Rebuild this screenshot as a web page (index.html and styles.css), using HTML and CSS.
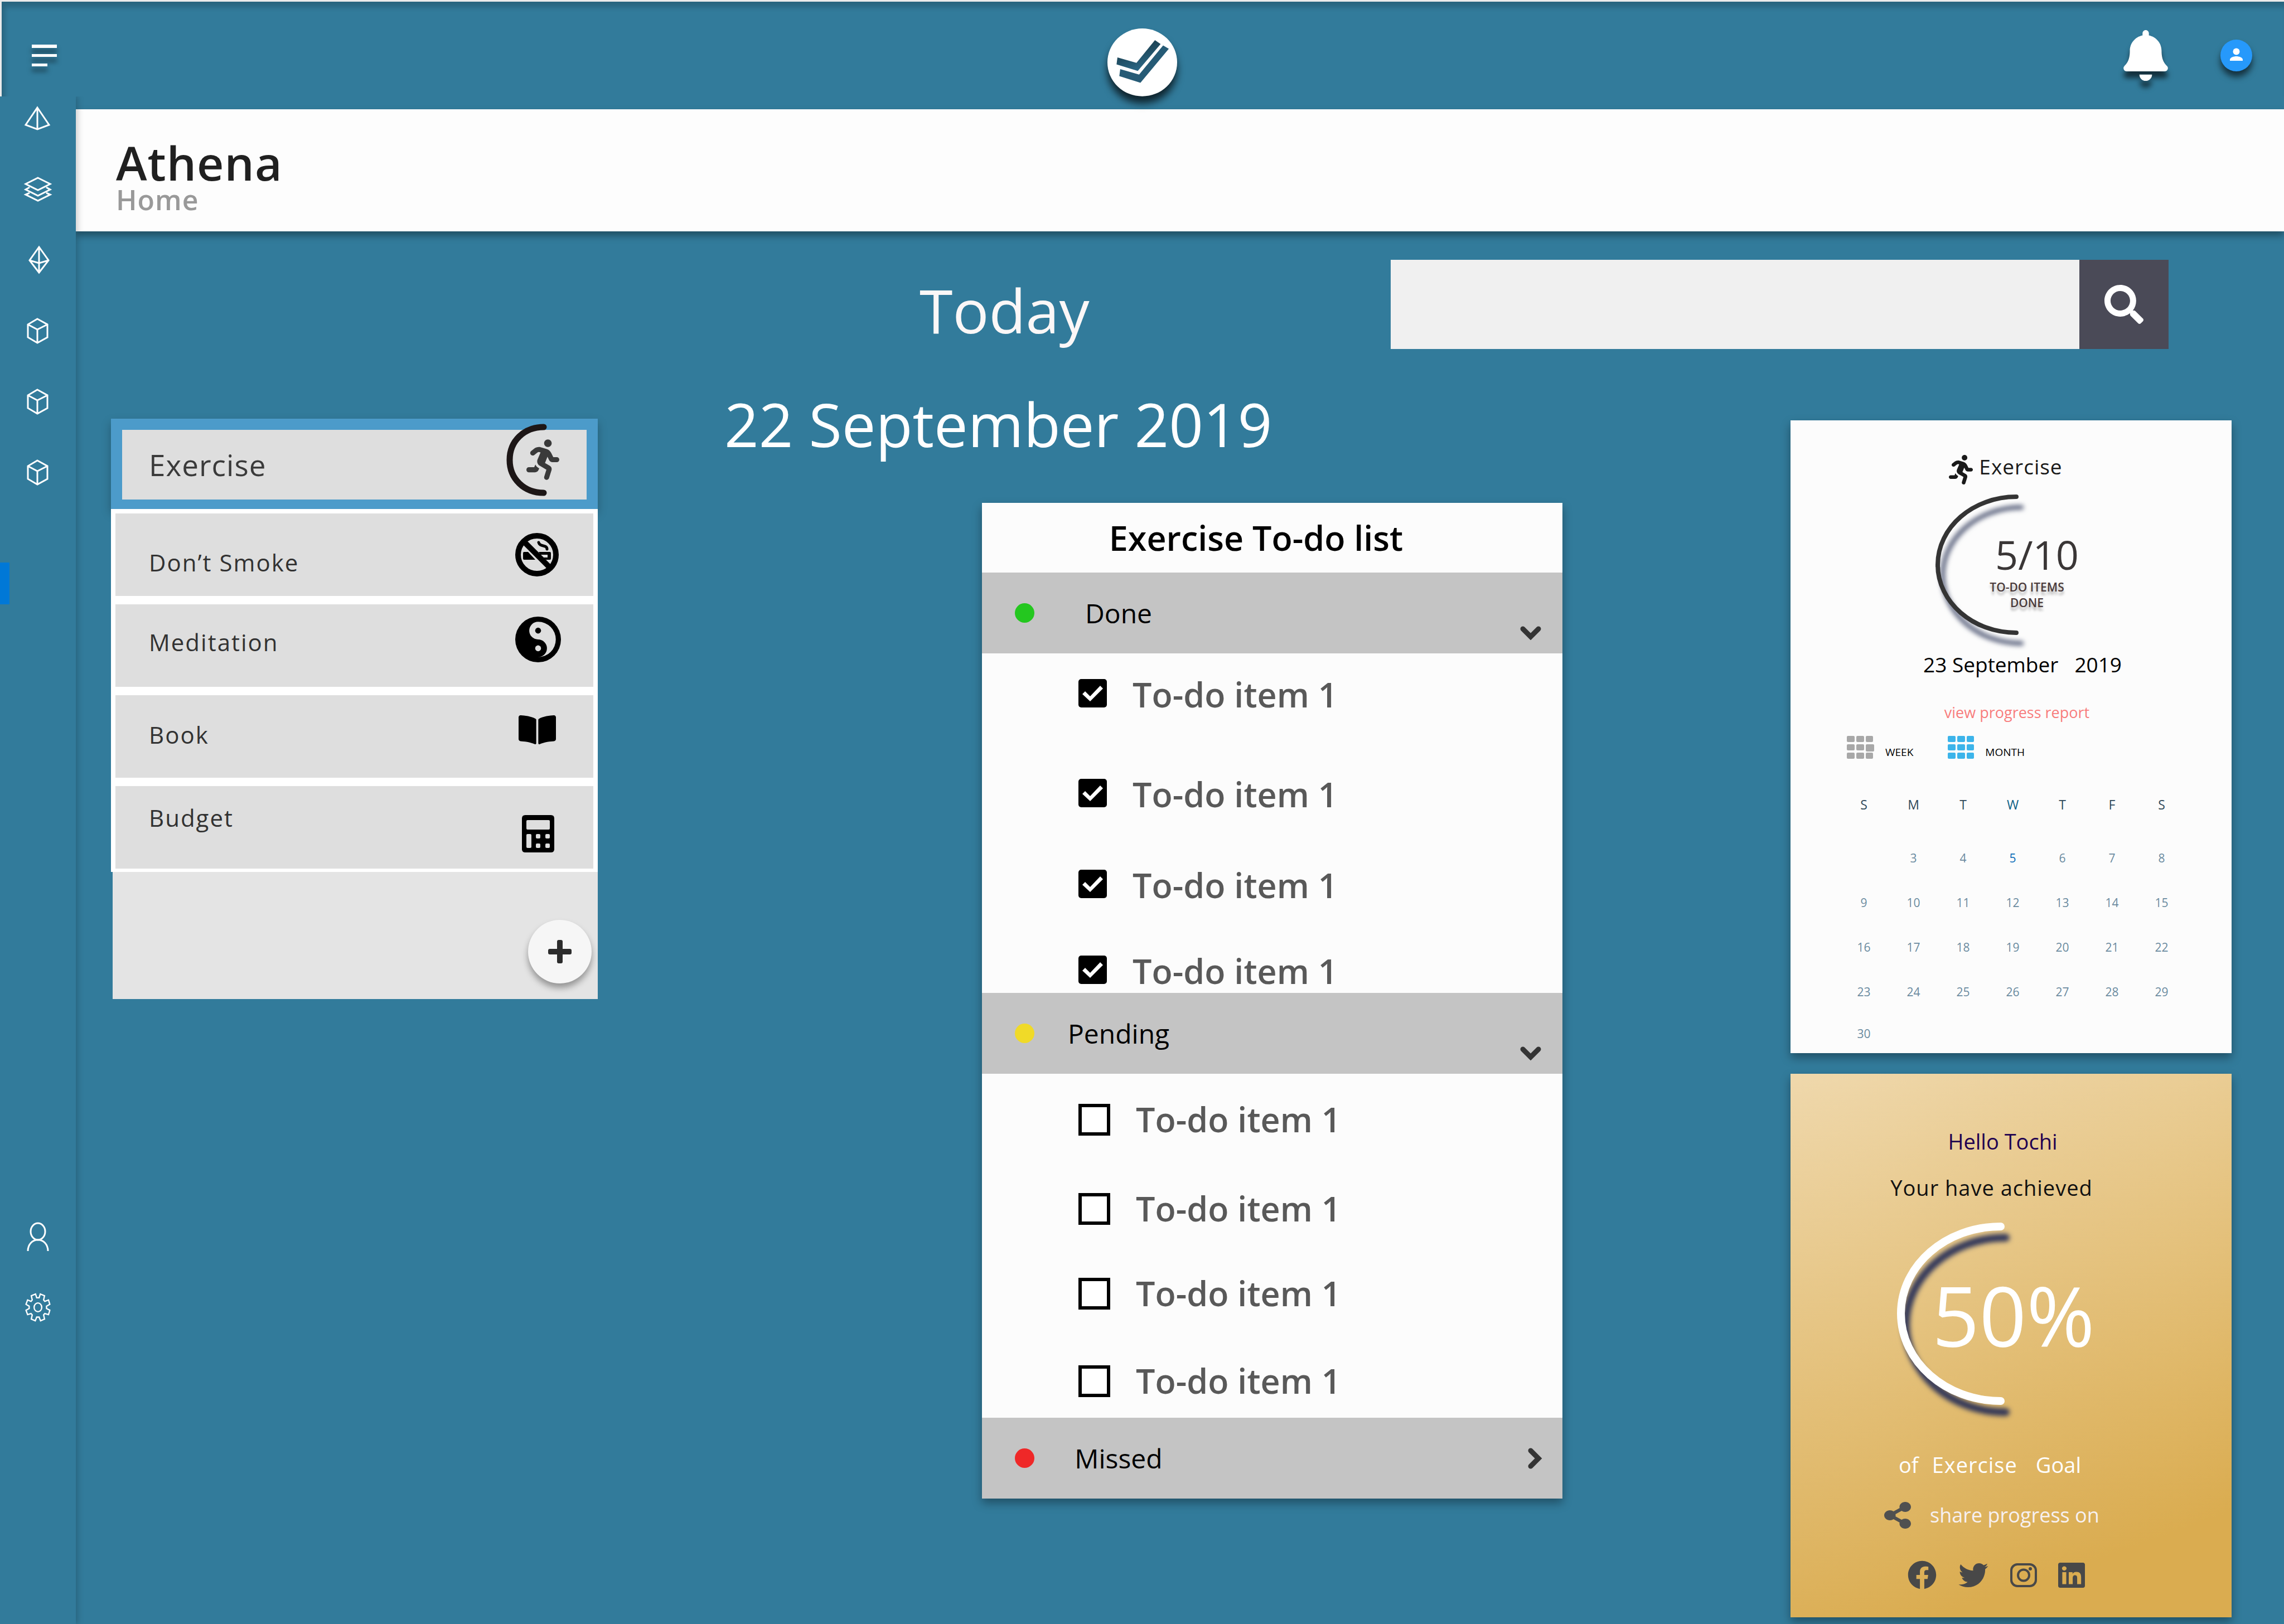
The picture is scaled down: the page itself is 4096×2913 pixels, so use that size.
FILE: index.html
```html
<!DOCTYPE html>
<html lang="en">
<head>
<meta charset="utf-8">
<title>Athena – Home</title>
<meta name="viewport" content="width=device-width, initial-scale=1">
<link rel="stylesheet" href="styles.css">
</head>
<body>
<svg class="defs" aria-hidden="true">
  <symbol id="runner" viewBox="0 0 416 512"><path d="M272 96c26.51 0 48-21.49 48-48S298.51 0 272 0s-48 21.49-48 48 21.49 48 48 48zM113.69 317.47l-14.8 34.52H32c-17.67 0-32 14.33-32 32s14.33 32 32 32h77.45c19.25 0 36.58-11.44 44.11-29.09l8.79-20.52-10.67-6.3c-17.32-10.23-30.06-25.37-37.99-42.61zM384 223.99h-44.03l-26.06-53.25c-12.5-25.55-35.45-44.23-61.78-50.94l-71.08-21.14c-28.3-6.8-57.77-.55-80.84 17.14l-39.67 30.41c-14.03 10.75-16.69 30.83-5.94 44.86s30.84 16.66 44.86 5.94l39.69-30.41c7.67-5.89 17.44-8 25.27-6.14l14.7 4.37-37.46 87.39c-12.62 29.48-1.31 64.01 26.3 80.31l84.98 50.17-27.47 87.73c-5.28 16.86 4.11 34.82 20.97 40.09 3.19 1 6.41 1.48 9.58 1.48 13.61 0 26.25-8.77 30.52-22.45l31.64-101.06c5.91-20.77-2.89-43.08-21.64-54.39l-61.24-36.14 31.31-78.28 20.27 41.43c8 16.34 24.92 26.89 43.11 26.89H384c17.67 0 32-14.33 32-32s-14.33-31.99-32-31.99z"/></symbol>
  <symbol id="cube" viewBox="0 0 56 56"><path d="M27 7 45 17V40L27 50 10 40V17ZM10 17 27 26 45 17M27 26V50"/></symbol>
  <symbol id="chevron" viewBox="0 0 40 26"><path d="M6 6 20 20 34 6" fill="none" stroke="currentColor" stroke-width="9" stroke-linecap="round" stroke-linejoin="miter"/></symbol>
  <linearGradient id="logo-shade" x1="0" y1="0" x2=".5" y2="1"><stop offset="0" stop-color="#173441"/><stop offset=".5" stop-color="#1f4a5e"/><stop offset="1" stop-color="#2c6a89"/></linearGradient>
</svg>

<header class="topbar">
  <button class="icon-button menu" aria-label="Menu"><svg width="46" height="40" viewBox="0 0 46 40" fill="#fff"><path d="M0 0H45V6H0ZM0 17H45V22H0ZM0 34H28V39H0Z"/></svg></button>
  <a class="logo" href="#" aria-label="Athena"><svg width="125" height="122" viewBox="66 66 528 515"><ellipse cx="330" cy="323" rx="264" ry="257" fill="#fff"/><path fill="url(#logo-shade)" d="M142 285 286 327 426 155 469 184 296 388 135 338Z"/><path fill="#265b76" d="M163 374 306 415 488 195 531 220 316 478 156 427Z"/></svg></a>
  <div class="topbar-actions">
    <button class="icon-button bell" aria-label="Notifications"><svg width="80" height="91" viewBox="0 0 448 512" fill="#fff"><path d="M224 512c35.32 0 63.97-28.65 63.97-64H160.03c0 35.35 28.65 64 63.97 64zm215.39-149.71c-19.32-20.76-55.47-51.99-55.47-154.29 0-77.7-54.48-139.9-127.94-155.16V32c0-17.67-14.32-32-31.98-32s-31.98 14.33-31.98 32v20.84C118.56 68.1 64.08 130.3 64.08 208c0 102.3-36.15 133.53-55.47 154.29-6 6.45-8.66 14.16-8.61 21.71.11 16.4 12.98 32 32.1 32h383.8c19.12 0 32-15.6 32.1-32 .05-7.55-2.61-15.27-8.61-21.71z"/></svg></button>
    <button class="icon-button avatar" aria-label="Account"><svg width="57" height="57" viewBox="0 0 57 57"><circle cx="28.500" cy="28.500" r="28.500" fill="#2699fb"/><circle cx="28.500" cy="21.500" r="6" fill="#fff"/><path d="M17 38v-2c0-4 7-6 11.500-6S40 32 40 36v2Z" fill="#fff"/></svg></button>
  </div>
</header>

<div class="shell">
  <nav class="sidebar" aria-label="Sections">
    <div class="side-group">
      <a href="#" aria-label="Overview"><svg viewBox="0 0 56 56"><path d="M27 9 48 40 27 48 6 40ZM27 9V48"/></svg></a>
      <a href="#" aria-label="Layers"><svg viewBox="0 0 56 56"><path d="M28 8 50 19 28 30 6 19ZM13 25 6 29 28 40 50 29 43 25M13 35 6 38 28 49 50 38 43 35"/></svg></a>
      <a href="#" aria-label="Goals"><svg viewBox="0 0 56 56"><path d="M30 5 47 29 30 51 13 29ZM30 5V51M13 29 30 34 47 29"/></svg></a>
      <a href="#" aria-label="Box one"><svg><use href="#cube"/></svg></a>
      <a href="#" aria-label="Box two"><svg><use href="#cube"/></svg></a>
      <a href="#" aria-label="Box three"><svg><use href="#cube"/></svg></a>
    </div>
    <div class="side-marker"></div>
    <div class="side-group side-group-end">
      <a href="#" aria-label="Profile"><svg viewBox="0 0 56 56"><ellipse cx="28" cy="19" rx="13" ry="15"/><path d="M10 54C10 42 18 34 28 34S46 42 46 54"/></svg></a>
      <a href="#" aria-label="Settings"><svg viewBox="20 603 236 236" class="gear"><path d="M120 620 129 649H147L156 620 188 633 181 665 190 676 218 665 228 698 203 712V730L228 743 218 776 190 768 181 778 188 810 158 823 147 795H129L118 823 88 810 95 778 86 768 60 776 48 743 72 730V712L48 698 60 665 86 676 95 665 88 633Z"/><ellipse cx="138" cy="721" rx="29" ry="33"/></svg></a>
    </div>
  </nav>

  <main class="main">
    <div class="page-head">
      <h1>Athena</h1>
      <p>Home</p>
    </div>

    <div class="content">
      <div class="day">
        <h2>Today</h2>
        <p>22 September 2019</p>
      </div>

      <form class="search" role="search">
        <input type="search" aria-label="Search">
        <button type="button" aria-label="Search"><svg width="70" height="70" viewBox="0 0 512 512" fill="#fff"><path d="M505 442.7L405.3 343c-4.5-4.5-10.6-7-17-7H372c27.6-35.3 44-79.7 44-128C416 93.1 322.9 0 208 0S0 93.1 0 208s93.1 208 208 208c48.3 0 92.7-16.4 128-44v16.3c0 6.4 2.5 12.5 7 17l99.700 99.700c9.400 9.400 24.600 9.400 33.900 0l28.300-28.300c9.400-9.400 9.400-24.600.1-34zM208 336c-70.700 0-128-57.200-128-128 0-70.700 57.200-128 128-128 70.700 0 128 57.200 128 128 0 70.700-57.200 128-128 128z"/></svg></button>
      </form>

      <aside class="habits">
        <div class="habit-active">
          <a href="#">
            <span>Exercise</span>
            <svg width="96" height="130" viewBox="0 0 96 130"><path d="M67 6C32 6 6 31 6 65S32 124 67 124" fill="none" stroke="#1d1616" stroke-width="11" stroke-linecap="round"/><use href="#runner" x="36" y="28" width="59" height="73" fill="#3a3a3a"/></svg>
          </a>
        </div>
        <ul class="habit-list">
          <li><a href="#" class="habit habit-smoke"><span>Don’t Smoke</span>
            <svg width="78" height="78" viewBox="0 0 78 78"><circle cx="39" cy="39" r="34" fill="none" stroke="#000" stroke-width="10"/><path d="M16 34H23L36 48H16Q14 48 14 46V36Q14 34 16 34ZM42 34H62Q64 34 64 36V46Q64 48 62 48H55L50 44H58V39H45Z"/><path d="M42 17C44 26 57 20 57 29" fill="none" stroke="#000" stroke-width="5" stroke-linecap="round"/><path d="M15 15 63 63" stroke="#000" stroke-width="10"/></svg></a></li>
          <li><a href="#" class="habit habit-meditation"><span>Meditation</span>
            <svg width="82" height="82" viewBox="0 0 496 496"><circle cx="248" cy="248" r="248"/><path fill="#dedede" d="M248 56a192 192 0 0 1 0 384a96 96 0 0 0 0-192a96 96 0 0 1 0-192Z"/><circle cx="248" cy="152" r="32"/><circle cx="248" cy="344" r="32" fill="#dedede"/></svg></a></li>
          <li><a href="#" class="habit habit-book"><span>Book</span>
            <svg width="67" height="60" viewBox="0 0 576 512"><path d="M542.22 32.050c-54.8 3.11-163.72 14.43-230.96 55.59-4.64 2.84-7.27 7.89-7.27 13.17v363.87c0 11.55 12.63 18.85 23.28 13.49 69.18-34.82 169.23-44.32 218.7-46.92 16.89-.89 30.02-14.43 30.02-30.66V62.75c.01-17.71-15.35-31.74-33.77-30.7zM264.73 87.64C197.5 46.48 88.58 35.17 33.78 32.05 15.36 31.01 0 45.04 0 62.75V400.6c0 16.24 13.13 29.78 30.02 30.66 49.49 2.6 149.59 12.11 218.77 46.95 10.62 5.35 23.21-1.94 23.21-13.46V100.63c0-5.29-2.62-10.14-7.27-12.99z"/></svg></a></li>
          <li><a href="#" class="habit habit-budget"><span>Budget</span>
            <svg width="58" height="67" viewBox="0 0 58 67"><path fill-rule="evenodd" d="M6 0H52Q58 0 58 6V61Q58 67 52 67H6Q0 67 0 61V6Q0 0 6 0ZM10 9Q8 9 8 11V24Q8 26 10 26H48Q50 26 50 24V11Q50 9 48 9ZM10 34Q8 34 8 36V57Q8 59 10 59H15Q17 59 17 57V36Q17 34 15 34ZM27 34Q25 34 25 36V40Q25 42 27 42H31Q33 42 33 40V36Q33 34 31 34ZM44 34Q42 34 42 36V40Q42 42 44 42H48Q50 42 50 40V36Q50 34 48 34ZM27 51Q25 51 25 53V57Q25 59 27 59H31Q33 59 33 57V53Q33 51 31 51ZM44 51Q42 51 42 53V57Q42 59 44 59H48Q50 59 50 57V53Q50 51 48 51Z"/></svg></a></li>
        </ul>
        <div class="habit-footer">
          <button class="add" aria-label="Add habit"><svg width="42" height="42" viewBox="0 0 42 42" fill="#2c2c2c"><rect x="16" width="10" height="42" rx="3"/><rect y="16" width="42" height="10" rx="3"/></svg></button>
        </div>
      </aside>

      <section class="todo">
        <h2>Exercise To-do list</h2>
        <button class="bar" aria-expanded="true"><i class="dot dot-done"></i><span>Done</span><svg class="chev-down" width="40" height="26"><use href="#chevron"/></svg></button>
        <ul class="items items-done">
          <li><label><input type="checkbox" checked>To-do item 1</label></li>
          <li><label><input type="checkbox" checked>To-do item 1</label></li>
          <li><label><input type="checkbox" checked>To-do item 1</label></li>
          <li><label><input type="checkbox" checked>To-do item 1</label></li>
        </ul>
        <button class="bar" aria-expanded="true"><i class="dot dot-pending"></i><span>Pending</span><svg class="chev-down" width="40" height="26"><use href="#chevron"/></svg></button>
        <ul class="items items-pending">
          <li><label><input type="checkbox">To-do item 1</label></li>
          <li><label><input type="checkbox">To-do item 1</label></li>
          <li><label><input type="checkbox">To-do item 1</label></li>
          <li><label><input type="checkbox">To-do item 1</label></li>
        </ul>
        <button class="bar" aria-expanded="false"><i class="dot dot-missed"></i><span>Missed</span><svg width="26" height="40" viewBox="0 0 26 40"><path d="M6 6 20 20 6 34" fill="none" stroke="currentColor" stroke-width="9" stroke-linecap="round"/></svg></button>
      </section>

      <div class="side-cards">
        <section class="progress-card">
          <h3><svg width="45" height="53"><use href="#runner"/></svg><span>Exercise</span></h3>
          <div class="gauge">
            <svg width="152" height="252" viewBox="0 0 152 252"><path d="M145 4C67 4 4 59 4 126S67 248 145 248" fill="none" stroke="#343434" stroke-width="8" stroke-linecap="round"/></svg>
            <div class="gauge-text"><strong>5/10</strong><span>TO-DO ITEMS<br>DONE</span></div>
          </div>
          <p class="date"><span>23 September</span><span>2019</span></p>
          <a class="report" href="#">view progress report</a>
          <div class="range">
            <button><svg width="49" height="41" viewBox="0 0 49 41" fill="#a8a8a8"><rect width="14" height="11" rx="2"/><rect x="17" width="14" height="11" rx="2"/><rect x="34" width="13" height="11" rx="2"/><rect y="15" width="14" height="11" rx="2"/><rect x="17" y="15" width="14" height="11" rx="2"/><rect x="34" y="15" width="15" height="13" rx="2"/><rect y="30" width="14" height="11" rx="2"/><rect x="17" y="30" width="14" height="11" rx="2"/><rect x="34" y="30" width="13" height="11" rx="2"/></svg>WEEK</button>
            <button><svg width="47" height="41" viewBox="0 0 47 41" fill="#3cb4ea"><rect width="14" height="11" rx="2"/><rect x="17" width="14" height="11" rx="2"/><rect x="34" width="13" height="11" rx="2"/><rect y="15" width="14" height="11" rx="2"/><rect x="17" y="15" width="14" height="11" rx="2"/><rect x="34" y="15" width="13" height="11" rx="2"/><rect y="30" width="14" height="11" rx="2"/><rect x="17" y="30" width="14" height="11" rx="2"/><rect x="34" y="30" width="13" height="11" rx="2"/></svg>MONTH</button>
          </div>
          <table class="calendar">
            <thead><tr><th>S</th><th>M</th><th>T</th><th class="now">W</th><th>T</th><th>F</th><th>S</th></tr></thead>
            <tbody>
              <tr><td></td><td>3</td><td>4</td><td class="now">5</td><td>6</td><td>7</td><td>8</td></tr>
              <tr><td>9</td><td>10</td><td>11</td><td>12</td><td>13</td><td>14</td><td>15</td></tr>
              <tr><td>16</td><td>17</td><td>18</td><td>19</td><td>20</td><td>21</td><td>22</td></tr>
              <tr><td>23</td><td>24</td><td>25</td><td>26</td><td>27</td><td>28</td><td>29</td></tr>
              <tr class="last"><td>30</td><td></td><td></td><td></td><td></td><td></td><td></td></tr>
            </tbody>
          </table>
        </section>

        <section class="goal-card">
          <h3>Hello Tochi</h3>
          <p class="achieved">Your have achieved</p>
          <div class="goal-gauge">
            <svg width="195" height="327" viewBox="0 0 195 327"><path d="M187 7C88 7 8 77 8 163S88 320 187 320" fill="none" stroke="#fff" stroke-width="14" stroke-linecap="round"/></svg>
            <strong>50%</strong>
          </div>
          <p class="goal"><span>of</span><span class="tracked">Exercise</span><span class="goal-end">Goal</span></p>
          <p class="share"><svg width="48" height="48" viewBox="0 0 448 512" preserveAspectRatio="none" fill="#505050"><path d="M352 320c-22.608 0-43.387 7.819-59.79 20.895l-102.486-64.054a96.551 96.551 0 0 0 0-41.683l102.486-64.054C308.613 184.181 329.392 192 352 192c53.019 0 96-42.981 96-96S405.019 0 352 0s-96 42.981-96 96c0 7.158.79 14.13 2.276 20.841L155.79 180.895C139.387 167.819 118.608 160 96 160c-53.019 0-96 42.981-96 96s42.981 96 96 96c22.608 0 43.387-7.819 59.79-20.895l102.486 64.054A96.301 96.301 0 0 0 256 416c0 53.019 42.981 96 96 96s96-42.981 96-96-42.981-96-96-96z"/></svg><span>share progress on</span></p>
          <div class="socials">
            <a href="#" aria-label="Facebook"><svg width="52" height="52" viewBox="0 0 512 512"><path d="M504 256C504 119 393 8 256 8S8 119 8 256c0 123.78 90.69 226.38 209.25 245V327.69h-63V256h63v-54.64c0-62.15 37-96.48 93.67-96.48 27.14 0 55.52 4.84 55.52 4.84v61h-31.28c-30.8 0-40.41 19.12-40.41 38.73V256h68.78l-11 71.69h-57.78V501C413.31 482.38 504 379.78 504 256z"/></svg></a>
            <a href="#" aria-label="Twitter"><svg width="56" height="53" viewBox="0 0 512 512"><path d="M459.37 151.716c.325 4.548.325 9.097.325 13.645 0 138.72-105.583 298.558-298.558 298.558-59.452 0-114.68-17.219-161.137-47.106 8.447.974 16.568 1.299 25.34 1.299 49.055 0 94.213-16.568 130.274-44.832-46.132-.975-84.792-31.188-98.112-72.772 6.498.974 12.995 1.624 19.818 1.624 9.421 0 18.843-1.3 27.614-3.573-48.081-9.747-84.143-51.98-84.143-102.985v-1.299c13.969 7.797 30.214 12.67 47.431 13.319-28.264-18.843-46.781-51.005-46.781-87.391 0-19.492 5.197-37.36 14.294-52.954 51.655 63.675 129.3 105.258 216.365 109.807-1.624-7.797-2.599-15.918-2.599-24.04 0-57.828 46.782-104.934 104.934-104.934 30.213 0 57.502 12.67 76.67 33.137 23.715-4.548 46.456-13.32 66.599-25.34-7.798 24.366-24.366 44.833-46.132 57.827 21.117-2.273 41.584-8.122 60.426-16.243-14.292 20.791-32.161 39.308-52.628 54.253z"/></svg></a>
            <a href="#" aria-label="Instagram"><svg width="48" height="43" viewBox="0 0 48 43" fill="none" stroke="#484848"><rect x="2" y="2" width="44" height="39" rx="11" stroke-width="4"/><circle cx="24" cy="21.500" r="10" stroke-width="4"/><circle cx="36" cy="10" r="3" fill="#484848" stroke="none"/></svg></a>
            <a href="#" aria-label="LinkedIn"><svg width="48" height="45" viewBox="0 32 448 448" preserveAspectRatio="none"><path d="M416 32H31.9C14.3 32 0 46.5 0 64.3v383.4C0 465.5 14.3 480 31.9 480H416c17.6 0 32-14.5 32-32.3V64.3c0-17.8-14.400-32.3-32-32.3zM135.400 416H69V202.200h66.500V416zm-33.200-243c-21.300 0-38.500-17.300-38.500-38.500S80.900 96 102.200 96c21.200 0 38.500 17.300 38.500 38.500 0 21.300-17.200 38.500-38.500 38.500zm282.100 243h-66.400V312c0-24.800-.5-56.700-34.500-56.700-34.600 0-39.900 27-39.900 54.900V416h-66.400V202.200h63.700v29.200h.9c8.900-16.8 30.600-34.500 62.900-34.500 67.200 0 79.700 44.300 79.700 101.900V416z"/></svg></a>
          </div>
        </section>
      </div>
    </div>
  </main>
</div>
</body>
</html>
```

FILE: styles.css
```css
* { box-sizing: border-box; }

body {
  margin: 0;
  min-height: 100vh;
  display: flex;
  flex-direction: column;
  background: #327b9b;
  color: #323232;
  font-family: "Open Sans", "Noto Sans", sans-serif;
}

h1, h2, h3, p, ul { margin: 0; padding: 0; font-weight: 400; }
ul { list-style: none; }
a { color: inherit; text-decoration: none; }
svg { display: block; flex: none; overflow: visible; }
button { border: 0; padding: 0; background: none; color: inherit; font: inherit; cursor: pointer; }
.defs { position: absolute; width: 0; height: 0; }

/* Top bar */
.topbar {
  display: grid;
  grid-template-columns: 1fr auto 1fr;
  align-items: center;
  height: 173px;
  padding: 23px 57px 0 54px;
  border-top: 3px solid #ebebeb;
  border-left: 3px solid #ebebeb;
  box-shadow: inset 6px 10px 10px rgba(0, 0, 0, .18);
}
.icon-button { display: block; justify-self: start; }
.menu svg { filter: drop-shadow(0 9px 4px rgba(0, 0, 0, .5)); }
.logo { align-self: end; filter: drop-shadow(0 13px 7px rgba(0, 0, 0, .7)); }
.topbar-actions { display: flex; justify-content: flex-end; align-items: center; gap: 94px; }
.bell svg { filter: drop-shadow(0 12px 5px rgba(0, 0, 0, .6)); }
.avatar svg { filter: drop-shadow(0 10px 6px rgba(0, 0, 0, .6)); }

.shell { display: flex; flex: 1; }

/* Sidebar */
.sidebar {
  display: flex;
  flex-direction: column;
  flex: none;
  width: 136px;
  padding: 11px 0 540px;
  background: #327b9b;
  box-shadow: 4px 0 10px rgba(0, 0, 0, .18);
  clip-path: inset(0 -20px 0 0);
  z-index: 1;
}
.side-group { display: flex; flex-direction: column; gap: 71px; padding-left: 40px; }
.side-group-end { margin-top: auto; }
.side-group svg { width: 56px; height: 56px; fill: none; stroke: #fff; stroke-width: 3px; }
.side-group .gear { stroke-width: 10px; }
.side-marker { width: 17px; height: 75px; margin-top: 134px; background: #0078d7; }

/* Page heading */
.main { flex: 1; min-width: 0; padding-top: 23px; }
.page-head {
  height: 219px;
  padding: 55px 72px 0;
  background: #fdfdfd;
  box-shadow: 0 8px 12px rgba(0, 0, 0, .35);
}
.page-head h1 { color: #202020; font-size: 84px; line-height: 82px; font-weight: 600; letter-spacing: 1px; }
.page-head p { color: #999; font-size: 50px; line-height: 50px; font-weight: 600; letter-spacing: 1px; }

/* Content grid */
.content {
  display: grid;
  grid-template-columns: 873fr 227fr 1195fr 308fr 409fr 791fr;
  grid-template-rows: 285px 151px auto;
  padding: 51px 94px 12px 63px;
}
.day { grid-area: 1 / 3 / 3 / 4; padding-top: 31px; color: #fff; font-size: 108px; line-height: 120px; white-space: nowrap; }
.day h2 { padding-left: 350px; font-size: 108px; color: #fbf7f7; }
.day p { margin-top: 84px; }

.search { grid-area: 1 / 4 / 2 / 7; display: flex; height: 160px; margin-right: 113px; }
.search input { flex: 1; min-width: 0; border: 0; padding: 0 40px; background: #f0f0f0; font: inherit; font-size: 60px; appearance: none; border-radius: 0; }
.search button { width: 160px; padding-left: 45px; background: #4a4a57; }

/* Habit list */
.habits { grid-area: 2 / 1 / 4 / 2; }
.habit-active { position: relative; padding: 20px 20px 17px; background: #4c9bca; box-shadow: 0 8px 16px rgba(0, 0, 0, .25); }
.habit-active a { display: flex; justify-content: space-between; height: 125px; padding: 0 48px; background: #dedede; color: #3a3a3a; font-size: 53px; line-height: 125px; letter-spacing: 1px; }
.habit-active svg { margin-top: -11px; }
.habit-list { position: relative; display: flex; flex-direction: column; gap: 15px; padding: 8px 8px 6px; background: #fff; }
.habit { display: flex; justify-content: space-between; align-items: flex-start; height: 148px; padding: 0 58px 0 60px; background: #dedede; font-size: 42px; line-height: 56px; letter-spacing: 2px; }
.habit svg { fill: #000; }
.habit span { flex: 1; padding-top: 40px; }
.habit-smoke span { padding-top: 60px; }
.habit-book span { padding-top: 43px; }
.habit-budget span { padding-top: 29px; }
.habit-smoke svg { margin: 35px 4px 0 0; }
.habit-meditation svg { margin-top: 22px; }
.habit-book svg { margin: 32px 9px 0 0; }
.habit-budget svg { margin: 52px 12px 0 0; }
.habit-footer { display: flex; justify-content: flex-end; align-items: flex-end; height: 228px; margin-left: 3px; padding: 0 11px 28px; background: #e4e4e4; }
.add { display: grid; place-items: center; width: 114px; height: 114px; border-radius: 50%; background: #f6f6f6; box-shadow: 0 8px 12px rgba(0, 0, 0, .35); }

/* To-do list */
.todo { grid-area: 3 / 3 / 4 / 5; justify-self: end; align-self: start; width: 1041px; background: #fcfcfc; box-shadow: 0 8px 16px rgba(0, 0, 0, .35); }
.todo h2 { padding-right: 58px; color: #000; font-size: 61px; line-height: 125px; font-weight: 600; text-align: center; }
.bar { display: flex; align-items: center; width: 100%; height: 145px; padding: 0 37px 0 59px; background: #c4c4c4; color: #000; font-size: 48px; }
.bar span { width: 302px; text-align: center; }
.bar svg { margin-left: auto; color: #343434; }
.bar .chev-down { align-self: flex-end; margin-bottom: 24px; }
.dot { width: 35px; height: 35px; border-radius: 50%; }
.dot-done { background: #24c71f; }
.dot-pending { background: #f0da28; }
.dot-missed { background: #ef2828; }
.items { display: grid; padding-left: 173px; color: #595959; font-size: 61px; line-height: 56px; font-weight: 600; }
.items-done { grid-template-rows: 179px 163px 154px 67px; padding-top: 46px; }
.items-pending { grid-template-rows: 160px 152px 157px 94px; padding-top: 54px; }
.items label { display: inline-flex; align-items: flex-start; gap: 46px; }
.items input { appearance: none; flex: none; width: 57px; height: 57px; margin: 0; border: 6px solid #000; background: #fff; }
.items input:checked { width: 51px; height: 51px; border: 0; border-radius: 5px; background: #000; }
.items input:checked::before {
  content: "";
  display: block;
  height: 51px;
  background: #fff;
  clip-path: polygon(7px 27px, 12px 22px, 21px 31px, 39px 12px, 44px 17px, 21px 40px);
}

/* Right-hand cards */
.side-cards { grid-area: 2 / 6 / 4 / 7; display: flex; flex-direction: column; gap: 37px; padding-top: 3px; }
.progress-card, .goal-card { box-shadow: 0 8px 16px rgba(0, 0, 0, .35); }
.progress-card { padding-top: 62px; background: #fcfcfc; color: #000; }
.progress-card h3 { display: flex; justify-content: center; gap: 10px; padding-right: 20px; color: #1a1a1a; font-size: 37px; line-height: 41px; letter-spacing: 1px; }
.progress-card h3 svg { fill: #1a1a1a; }
.gauge { display: grid; height: 252px; margin: 18px 0 0 260px; }
.gauge > * { grid-area: 1 / 1; }
.gauge svg { filter: drop-shadow(9px 19px 4px rgba(46, 56, 90, .8)); }
.gauge-text { width: 170px; margin: 67px 0 0 79px; text-align: center; }
.gauge strong { display: block; padding-left: 28px; color: #3a3636; font-size: 72px; line-height: 80px; font-weight: 400; }
.gauge span { display: block; margin-top: 5px; color: #4b3b3b; font-size: 21px; line-height: 28px; font-weight: 600; text-shadow: 0 6px 4px rgba(0, 0, 0, .3); }
.date { display: flex; gap: 29px; margin-top: 31px; padding-left: 238px; font-size: 37px; line-height: 44px; }
.report { display: block; margin-top: 46px; padding-left: 21px; color: #f87c7c; font-size: 27px; line-height: 36px; text-align: center; }
.range { display: flex; gap: 62px; margin-top: 24px; padding-left: 101px; font-size: 19px; line-height: 24px; }
.range button { display: flex; align-items: flex-end; gap: 20px; }
.calendar { table-layout: fixed; width: 623px; margin: 25px 0 0 87px; border-collapse: collapse; text-align: center; color: #6b8ba0; font-size: 21px; }
.calendar th, .calendar td { height: 80px; padding: 0; }
.calendar th { height: 113px; color: #2f4858; font-size: 23px; font-weight: 400; }
.calendar .last td { height: 70px; }
.calendar th.now { color: #0c5f86; }
.calendar td.now { color: #0a6cb8; }

.goal-card { padding: 96px 0 50px; background: linear-gradient(160deg, #efd8ac, #daac50 85%); color: #fff; font-size: 38px; line-height: 50px; }
.goal-card h3 { padding-right: 30px; color: #1f0050; font-size: 38px; text-align: center; }
.achieved { margin-top: 33px; padding-right: 70px; color: #111; letter-spacing: 1px; text-align: center; }
.goal-gauge { display: grid; height: 327px; margin: 38px 0 0 190px; }
.goal-gauge > * { grid-area: 1 / 1; }
.goal-gauge svg { filter: drop-shadow(9px 20px 4px rgba(30, 40, 85, .9)); }
.goal-gauge strong { position: relative; margin: 86px 0 0 64px; font-size: 148px; line-height: 160px; font-weight: 400; }
.goal { display: flex; gap: 24px; margin-top: 82px; padding-left: 194px; }
.tracked { letter-spacing: 1px; }
.goal-end { padding-left: 9px; }
.share { display: flex; gap: 34px; margin-top: 42px; padding-left: 168px; color: #f7f0f0; font-size: 36px; line-height: 48px; }
.socials { display: flex; align-items: center; gap: 38px; height: 52px; margin-top: 57px; padding-left: 210px; fill: #484848; }
```
